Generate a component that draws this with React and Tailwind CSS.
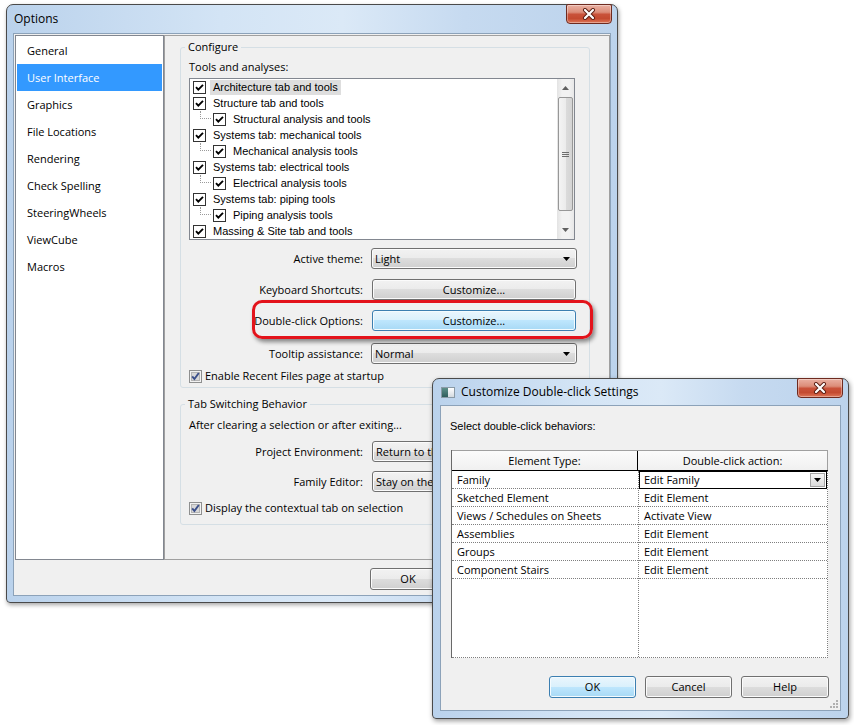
import React from 'react';

const seg = "font-['Open_Sans',sans-serif] text-[11px] leading-[14px]";
const tah = "font-['Liberation_Sans',Arial,sans-serif] text-[11px] leading-[13px]";

const frameBg =
  'bg-[linear-gradient(90deg,#bad2ec,#d3e4f5_35%,#dbe9f7_55%,#c6daf0_75%,#bcd3ec)]';

const tools = [
  { label: 'Architecture tab and tools', hi: true },
  { label: 'Structure tab and tools' },
  { label: 'Structural analysis and tools', sub: true },
  { label: 'Systems tab: mechanical tools' },
  { label: 'Mechanical analysis tools', sub: true },
  { label: 'Systems tab: electrical tools' },
  { label: 'Electrical analysis tools', sub: true },
  { label: 'Systems tab: piping tools' },
  { label: 'Piping analysis tools', sub: true },
  { label: 'Massing & Site tab and tools' },
];

const pages = [
  'General',
  'User Interface',
  'Graphics',
  'File Locations',
  'Rendering',
  'Check Spelling',
  'SteeringWheels',
  'ViewCube',
  'Macros',
];

const behaviors = [
  ['Family', 'Edit Family'],
  ['Sketched Element', 'Edit Element'],
  ['Views / Schedules on Sheets', 'Activate View'],
  ['Assemblies', 'Edit Element'],
  ['Groups', 'Edit Element'],
  ['Component Stairs', 'Edit Element'],
];

function CloseButton() {
  return (
    <div className="absolute right-[5px] top-[-1px] flex h-[20px] w-[46px] items-center justify-center rounded-b-[4px] rounded-t-[2px] border border-[#6e2a1f] bg-[linear-gradient(#eab0a2,#dc8d79_40%,#c9523a_52%,#c44a30_75%,#de7658)] shadow-[inset_0_0_0_1px_rgba(255,255,255,0.35)]">
      <svg width="14" height="12" viewBox="0 0 14 12">
        <path d="M3 2 L11 10 M11 2 L3 10" stroke="#5a1d12" strokeWidth="4" strokeLinecap="round" />
        <path d="M3 2 L11 10 M11 2 L3 10" stroke="#ffffff" strokeWidth="2.2" strokeLinecap="round" />
      </svg>
    </div>
  );
}

function TreeCheck() {
  return (
    <svg width="13" height="13" viewBox="0 0 13 13" className="shrink-0">
      <rect x="0.5" y="0.5" width="12" height="12" fill="#ffffff" stroke="#333333" />
      <path d="M3 6.2 L5.3 8.6 L10 3.8" fill="none" stroke="#000000" strokeWidth="1.9" />
    </svg>
  );
}

function Win7Check() {
  return (
    <svg width="13" height="13" viewBox="0 0 13 13" className="shrink-0">
      <rect x="0.5" y="0.5" width="12" height="12" fill="#f2f2f2" stroke="#8e8f8f" />
      <rect x="2.5" y="2.5" width="8" height="8" fill="#d8d8d8" stroke="#b4b4b4" />
      <path d="M3.2 6.4 L5.4 9 L9.8 3" fill="none" stroke="#3b4f8a" strokeWidth="1.9" />
    </svg>
  );
}

function Arrow({ up = false, color = '#000000' }) {
  return (
    <svg width="7" height="4" viewBox="0 0 7 4" className="shrink-0">
      <path d={up ? 'M0 4 H7 L3.5 0 Z' : 'M0 0 H7 L3.5 4 Z'} fill={color} />
    </svg>
  );
}

const plainBtn =
  'border-[#707070] bg-[linear-gradient(#f2f2f2,#ebebeb_50%,#dddddd_50%,#cfcfcf)] shadow-[inset_0_0_0_1px_#fbfbfb]';
const hotBtn =
  'border-[#3c7fb1] bg-[linear-gradient(#eaf6fd,#d9f0fc_50%,#bee6fd_50%,#a7d9f5)] shadow-[inset_0_0_0_1px_#f4fbfe]';

function Button({ children, hot = false, className = '' }) {
  return (
    <div
      className={`flex items-center justify-center rounded-[3px] border text-black ${seg} ${hot ? hotBtn : plainBtn} ${className}`}
    >
      {children}
    </div>
  );
}

function Combo({ value, className = '' }) {
  return (
    <div
      className={`flex items-center justify-between rounded-[3px] border pl-[3px] pr-[6px] text-black ${seg} ${plainBtn} ${className}`}
    >
      <span>{value}</span>
      <Arrow />
    </div>
  );
}

function FormRow({ label, children, className = '' }) {
  return (
    <div className={`flex items-center ${className}`}>
      <div className={`w-[174px] shrink-0 text-right text-black ${seg}`}>{label}</div>
      {children}
    </div>
  );
}

function ToolsList() {
  return (
    <div className="flex h-[162px] w-[386px] border border-[#828790] bg-white">
      <div className="flex-1">
        {tools.map((t) => (
          <div key={t.label} className={`flex h-[16px] items-center ${t.sub ? 'pl-[10px]' : 'pl-[3px]'}`}>
            {t.sub && <div className="mr-[2px] h-[8px] w-[11px] shrink-0 self-start border-b border-l border-dotted border-[#9a9a9a]" />}
            <TreeCheck />
            <span className={`ml-[4px] px-[3px] text-black ${tah} ${t.hi ? 'bg-[#dedede] leading-[15px]' : ''}`}>
              {t.label}
            </span>
          </div>
        ))}
      </div>
      <div className="flex w-[17px] flex-col bg-[linear-gradient(90deg,#e3e3e3,#f2f2f2_30%,#f2f2f2_70%,#e8e8e8)]">
        <div className="flex h-[18px] items-center justify-center">
          <Arrow up color="#606060" />
        </div>
        <div className="mx-[1px] flex h-[114px] items-center justify-center rounded-[2px] border border-[#979797] bg-[linear-gradient(90deg,#f4f4f4,#ececec_50%,#dcdcdc_50%,#d4d4d4)]">
          <div className="flex flex-col gap-[1px]">
            <div className="h-[1px] w-[7px] bg-[#6d6d6d]" />
            <div className="h-[1px] w-[7px] bg-[#6d6d6d]" />
            <div className="h-[1px] w-[7px] bg-[#6d6d6d]" />
          </div>
        </div>
        <div className="flex-1" />
        <div className="flex h-[18px] items-center justify-center">
          <Arrow color="#606060" />
        </div>
      </div>
    </div>
  );
}

function OptionsWindow() {
  return (
    <div className={`absolute left-[6px] top-[4px] flex h-[599px] w-[612px] flex-col rounded-b-[4px] rounded-t-[7px] border border-[#4a4a4a] px-[6px] pb-[6px] shadow-[1px_2px_4px_rgba(0,0,0,0.35)] ${frameBg}`}>
      <div className="flex h-[28px] items-center pl-[1px]">
        <span className="font-['Open_Sans',sans-serif] text-[12px] text-black">Options</span>
      </div>
      <CloseButton />
      <div className="flex flex-1 flex-col border border-[#8ca2b9] bg-[#f0f0f0]">
        <div className="mt-[1px] flex h-[525px]">
          {/* page list */}
          <div className="ml-[1px] w-[149px] border border-[#828790] bg-white px-[1px] pt-[1px]">
            {pages.map((p) => (
              <div
                key={p}
                className={`flex h-[27px] items-center pl-[10px] ${seg} ${p === 'User Interface' ? 'bg-[#3399ff] text-white' : 'text-black'}`}
              >
                {p}
              </div>
            ))}
          </div>
          {/* settings panel */}
          <div className="w-[446px] border border-[#a0a0a0] pl-[15px] pt-[4px]">
            <fieldset className="w-[410px] rounded-[3px] border border-[#d5dfe5] pb-[4px] pl-[8px] pt-[6px]">
              <legend className={`-ml-[4px] px-[3px] text-black ${seg}`}>Configure</legend>
              <div className={`text-black ${seg}`}>Tools and analyses:</div>
              <div className="mt-[4px]">
                <ToolsList />
              </div>
              <FormRow label="Active theme:" className="mt-[8px]">
                <Combo value="Light" className="ml-[8px] h-[21px] w-[206px]" />
              </FormRow>
              <FormRow label="Keyboard Shortcuts:" className="mt-[10px]">
                <Button className="ml-[9px] h-[21px] w-[204px]">Customize...</Button>
              </FormRow>
              <FormRow label="Double-click Options:" className="mt-[10px]">
                <Button hot className="ml-[9px] h-[21px] w-[204px]">Customize...</Button>
              </FormRow>
              <FormRow label="Tooltip assistance:" className="mt-[12px]">
                <Combo value="Normal" className="ml-[8px] h-[21px] w-[206px]" />
              </FormRow>
              <div className="mt-[5px] flex h-[14px] items-center gap-[3px]">
                <Win7Check />
                <span className={`text-black ${seg}`}>Enable Recent Files page at startup</span>
              </div>
            </fieldset>
            <fieldset className="mt-[9px] w-[410px] rounded-[3px] border border-[#d5dfe5] pb-[9px] pl-[8px] pt-[7px]">
              <legend className={`-ml-[4px] px-[3px] text-black ${seg}`}>Tab Switching Behavior</legend>
              <div className={`text-black ${seg}`}>After clearing a selection or after exiting...</div>
              <FormRow label="Project Environment:" className="mt-[9px]">
                <Combo value="Return to the" className="ml-[9px] h-[21px] w-[205px]" />
              </FormRow>
              <FormRow label="Family Editor:" className="mt-[9px]">
                <Combo value="Stay on the" className="ml-[9px] h-[21px] w-[205px]" />
              </FormRow>
              <div className="mt-[9px] flex h-[14px] items-center gap-[3px]">
                <Win7Check />
                <span className={`text-black ${seg}`}>Display the contextual tab on selection</span>
              </div>
            </fieldset>
          </div>
        </div>
        <div className="flex flex-1 items-start pl-[356px] pt-[8px]">
          <Button className="h-[22px] w-[76px]">OK</Button>
        </div>
      </div>
    </div>
  );
}

function DoubleClickDialog() {
  return (
    <div className={`absolute left-[432px] top-[378px] flex h-[341px] w-[417px] flex-col rounded-b-[4px] rounded-t-[7px] border border-[#4a4a4a] px-[7px] pb-[7px] shadow-[1px_2px_5px_rgba(0,0,0,0.4)] ${frameBg}`}>
      <div className="flex h-[26px] items-center gap-[6px] pl-[1px]">
        <div className="flex h-[11px] w-[14px] border border-[#8a9aa6] bg-[#e8ecef]">
          <div className="w-[6px] bg-[linear-gradient(#5d8f8a,#2f5e5c)]" />
          <div className="flex-1 bg-[linear-gradient(#ffffff,#d4dadf)]" />
        </div>
        <span className="font-['Open_Sans',sans-serif] text-[12px] text-black">Customize Double-click Settings</span>
      </div>
      <CloseButton />
      <div className="relative flex flex-1 flex-col border border-[#8ca2b9] bg-[#f0f0f0] pl-[9px] pt-[14px]">
        <div className={`text-black ${tah}`}>Select double-click behaviors:</div>
        <div className="ml-[1px] mt-[17px] flex h-[208px] w-[377px] flex-col border-l border-[#696969]">
          <div className="flex h-[21px] border-b border-t border-b-black border-t-[#a0a0a0] bg-[linear-gradient(#fbfbfb,#f0f0f0)]">
            <div className={`flex w-[186px] items-center justify-center border-r border-black text-black ${seg}`}>Element Type:</div>
            <div className={`flex flex-1 items-center justify-center border-r border-[#a0a0a0] text-black ${seg}`}>Double-click action:</div>
          </div>
          <div className="flex flex-1 border-b border-r border-dotted border-[#7f7f7f] bg-white">
            <div className="w-[187px] border-r border-dotted border-[#7f7f7f]">
              {behaviors.map(([t]) => (
                <div key={t} className={`flex h-[18px] items-center border-b border-dotted border-[#7f7f7f] pl-[5px] text-black ${seg}`}>
                  {t}
                </div>
              ))}
            </div>
            <div className="flex-1">
              {behaviors.map(([t, a], i) =>
                i === 0 ? (
                  <div key={t} className={`flex h-[18px] items-center justify-between border border-black pl-[4px] pr-[1px] text-black ${seg}`}>
                    <span>{a}</span>
                    <div className="flex h-[14px] w-[15px] items-center justify-center border border-[#a5a5a5] bg-[linear-gradient(#f4f4f4,#dcdcdc)]">
                      <Arrow />
                    </div>
                  </div>
                ) : (
                  <div key={t} className={`flex h-[18px] items-center border-b border-dotted border-[#7f7f7f] pl-[5px] text-black ${seg}`}>
                    {a}
                  </div>
                )
              )}
            </div>
          </div>
        </div>
        <div className="ml-[99px] mt-[18px] flex gap-[9px]">
          <Button hot className="h-[22px] w-[87px]">OK</Button>
          <Button className="h-[22px] w-[87px]">Cancel</Button>
          <Button className="h-[22px] w-[88px]">Help</Button>
        </div>
        {/* size grip */}
        <div className="absolute bottom-[2px] right-[2px] grid grid-cols-3 gap-[1px]">
          <div className="h-[2px] w-[2px]" />
          <div className="h-[2px] w-[2px]" />
          <div className="h-[2px] w-[2px] bg-[#b0b0b0]" />
          <div className="h-[2px] w-[2px]" />
          <div className="h-[2px] w-[2px] bg-[#b0b0b0]" />
          <div className="h-[2px] w-[2px] bg-[#b0b0b0]" />
          <div className="h-[2px] w-[2px] bg-[#b0b0b0]" />
          <div className="h-[2px] w-[2px] bg-[#b0b0b0]" />
          <div className="h-[2px] w-[2px] bg-[#b0b0b0]" />
        </div>
      </div>
    </div>
  );
}

export default function App() {
  return (
    <div className="relative h-[725px] w-[854px] overflow-hidden bg-white">
      <OptionsWindow />
      {/* red callout around the double-click option */}
      <div className="absolute left-[252px] top-[300px] h-[39px] w-[341px] rounded-[10px] border-[3px] border-[#e3131b] shadow-[2px_3px_4px_rgba(0,0,0,0.45)]" />
      <DoubleClickDialog />
    </div>
  );
}
